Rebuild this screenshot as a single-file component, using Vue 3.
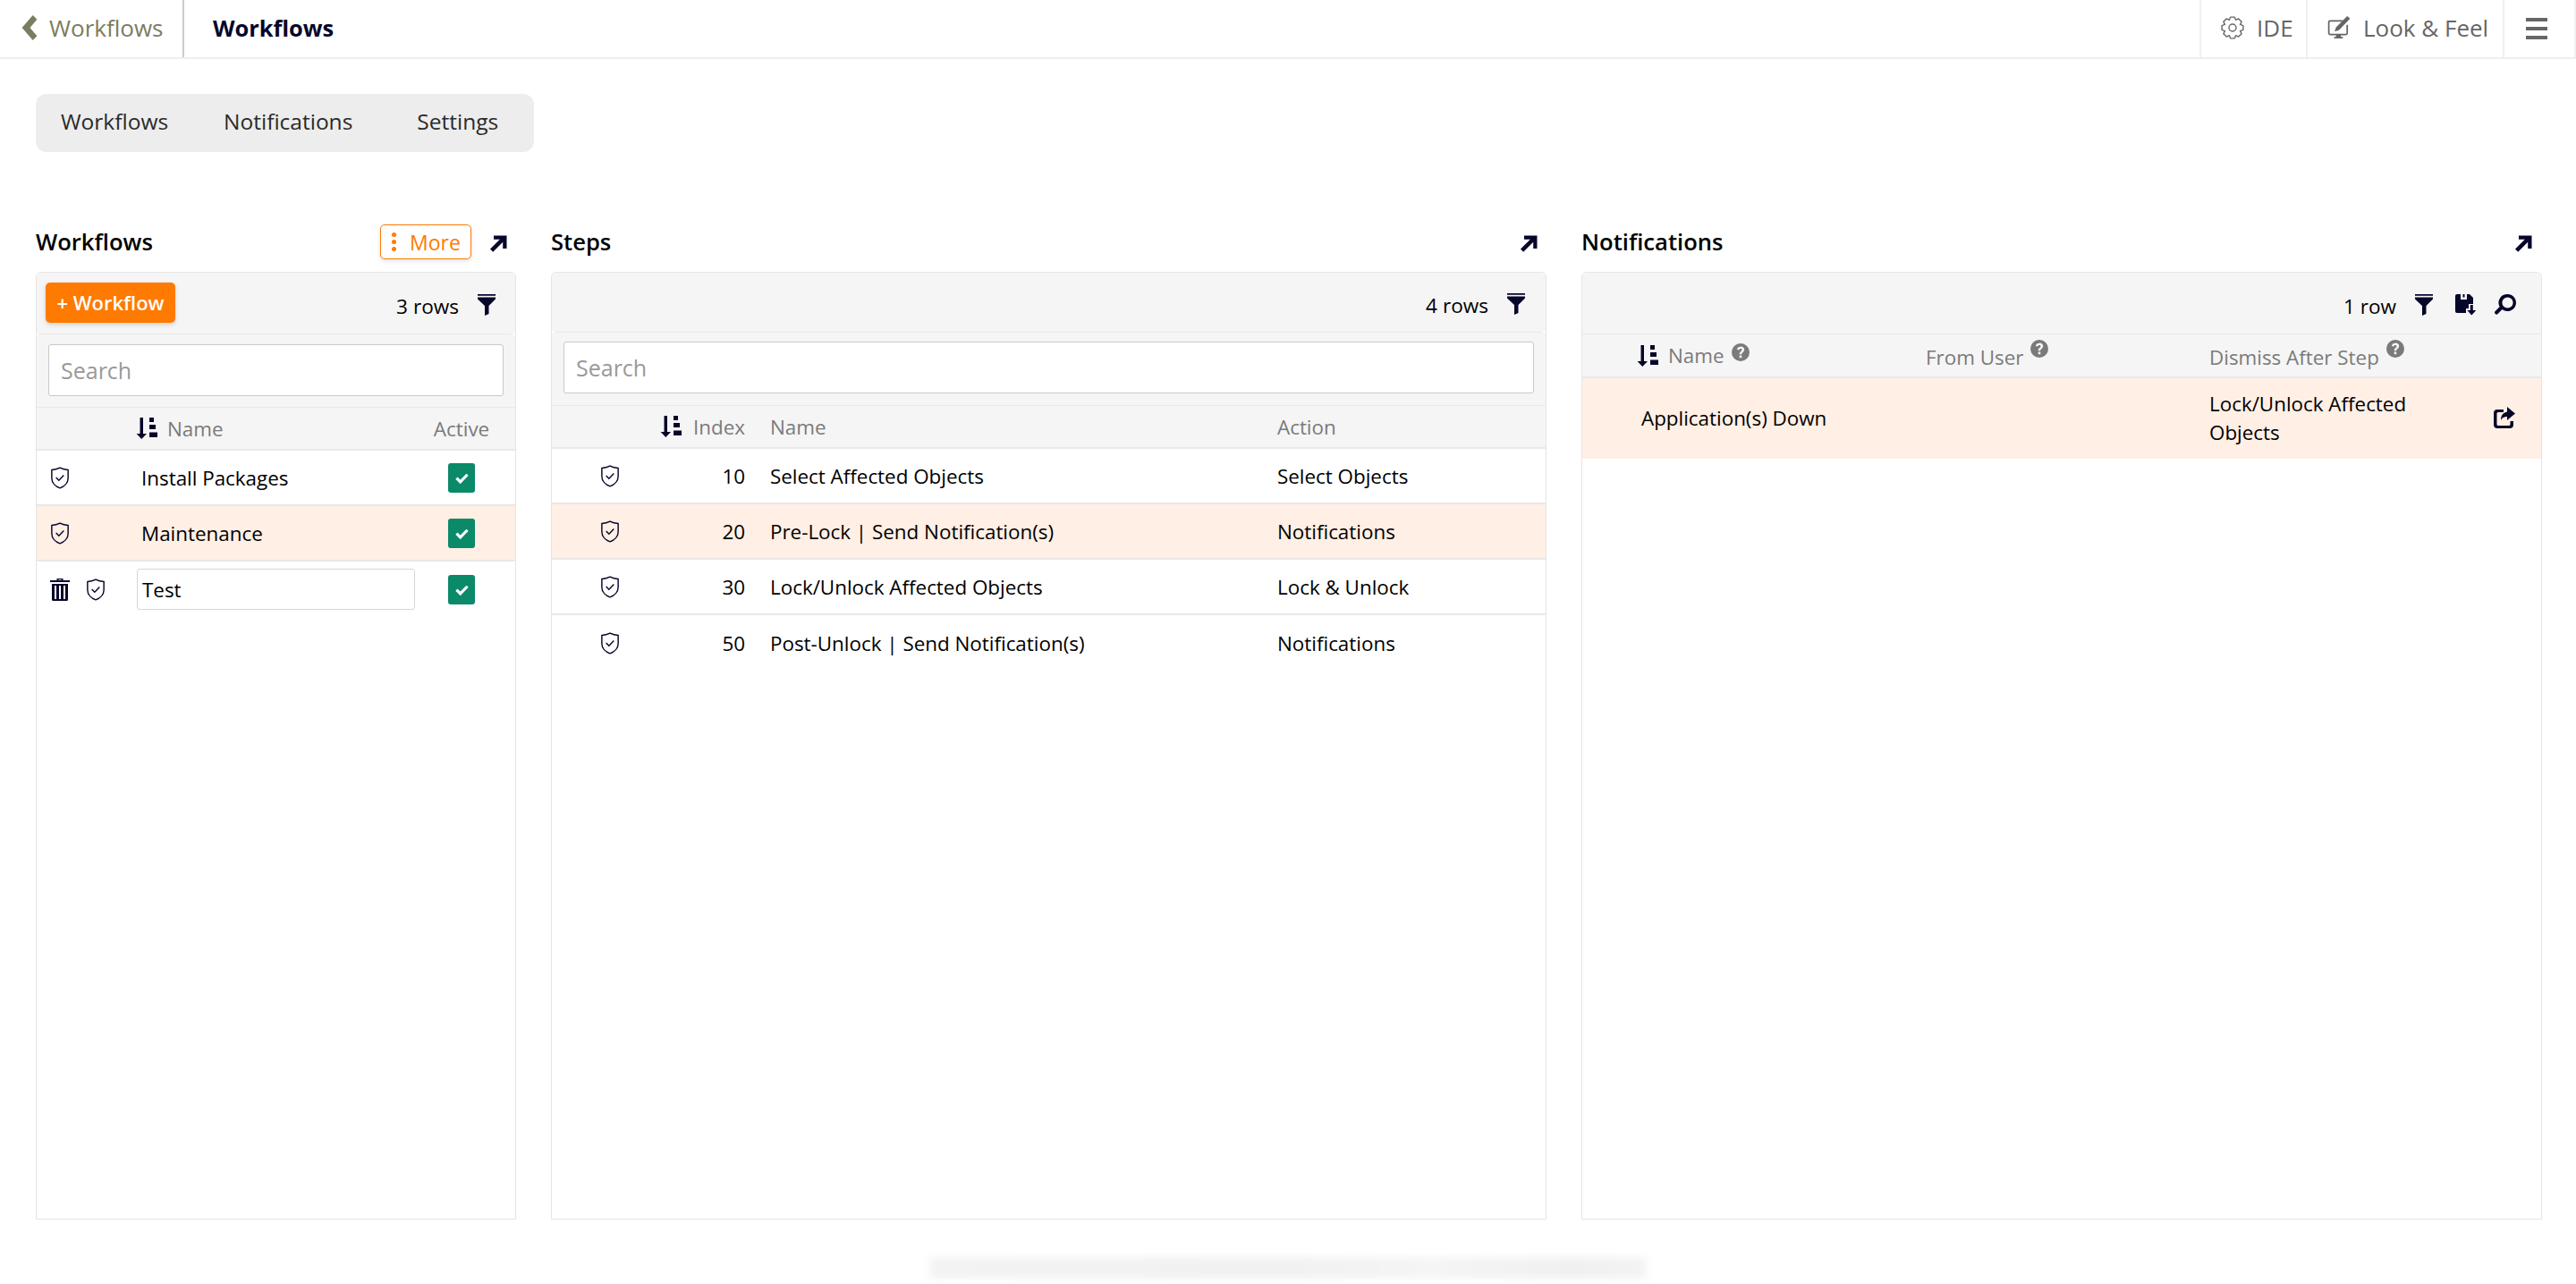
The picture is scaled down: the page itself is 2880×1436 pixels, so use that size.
<script setup>
const tabs = ['Workflows', 'Notifications', 'Settings'];

const workflows = [
  { name: 'Install Packages' },
  { name: 'Maintenance', selected: true },
];

const steps = [
  { index: 10, name: 'Select Affected Objects', action: 'Select Objects' },
  { index: 20, name: 'Pre-Lock | Send Notification(s)', action: 'Notifications', selected: true },
  { index: 30, name: 'Lock/Unlock Affected Objects', action: 'Lock & Unlock' },
  { index: 50, name: 'Post-Unlock | Send Notification(s)', action: 'Notifications' },
];

// outline of the 8 tooth gear in the top bar
const gearPath = (() => {
  const pts = [];
  for (let i = 0; i < 8; i++) {
    const mid = (i * Math.PI) / 4;
    [[-0.39, 8.6], [-0.2, 11.2], [0.2, 11.2], [0.39, 8.6]].forEach(([off, r]) => {
      pts.push(`${(12 + r * Math.cos(mid + off)).toFixed(2)} ${(12 + r * Math.sin(mid + off)).toFixed(2)}`);
    });
  }
  return `M${pts.join('L')}Z`;
})();
</script>

<template>
  <div class="page">
    <svg class="sprite" aria-hidden="true">
      <defs>
        <symbol id="i-arrow" viewBox="0 0 20 20">
          <path d="M5 1.500h14.500V16h-4.300V8.800L4.200 19.800 1 16.600 11.800 5.800H5z" />
        </symbol>
        <symbol id="i-funnel" viewBox="0 0 20 24">
          <path d="M0 0h20v1.800H0zM0 3.500h20v2L12.500 13v9l-4.500 2V13L0 5.500z" />
        </symbol>
        <symbol id="i-sort" viewBox="0 0 24 24">
          <path d="M4.500 0h3.500v18h4l-5.700 6L.6 18h3.900z" />
          <path d="M15 0h5v5h-5zM15 8h7v5h-7zM15 16.500h9V22h-9z" />
        </symbol>
        <symbol id="i-shield" viewBox="0 0 22 26">
          <path d="M11 1.200c3 1.500 6 2.300 9.500 2.500v9.500c0 5.500-4.300 9.800-9.500 11.600C5.800 23 1.500 18.700 1.500 13.200V3.700C5 3.500 8 2.700 11 1.200z" fill="none" stroke="currentColor" stroke-width="1.500" />
          <path d="M6.500 12.500l3.300 3.300 5.700-5.800" fill="none" stroke="currentColor" stroke-width="1.500" />
        </symbol>
        <symbol id="i-trash" viewBox="0 0 22 26">
          <path d="M7.500 3V1h7v2H22v2H0V3zM9.300 2.200V3h3.400v-.8z" />
          <path d="M2 7h18v17.500a1.500 1.500 0 0 1-1.500 1.500h-15A1.500 1.500 0 0 1 2 24.500zM5 9v15h2V9zM10 9v15h2V9zM15 9v15h2V9z" fill-rule="evenodd" />
        </symbol>
        <symbol id="i-check" viewBox="0 0 16 16">
          <path d="M1.500 8.200l4.500 4.500 8.500-8.700" fill="none" stroke="#fff" stroke-width="3.400" />
        </symbol>
        <symbol id="i-help" viewBox="0 0 20 20">
          <path fill-rule="evenodd" d="M10 0a10 10 0 1 1 0 20 10 10 0 0 1 0-20zM8.700 13.600v2.600h2.600v-2.600zM10 3.800c-2.300 0-3.800 1.200-4.100 3.300l2.300.4c.2-1.100.8-1.600 1.800-1.600.9 0 1.500.5 1.500 1.300 0 .7-.4 1.100-1.200 1.700-1.200.9-1.600 1.700-1.600 3.300h2.500c0-.9.200-1.200 1.100-1.900 1.100-.8 1.900-1.700 1.900-3.200 0-2.200-1.700-3.600-4.200-3.600z" />
        </symbol>
      </defs>
    </svg>

    <header class="topbar">
      <a class="back">
        <svg class="back-icon" viewBox="0 0 18 30"><path d="M13 0l5 5L9.500 15 18 25l-5 5L0 15z" /></svg>
        <span>Workflows</span>
      </a>
      <div class="title">Workflows</div>
      <div class="top-actions">
        <a class="top-btn">
          <svg class="top-icon" viewBox="0 0 24 24" fill="none" stroke="currentColor" stroke-width="1.300" stroke-linejoin="round">
            <circle cx="12" cy="12" r="3.700" />
            <path :d="gearPath" />
          </svg>
          <span>IDE</span>
        </a>
        <a class="top-btn look">
          <svg class="top-icon wide" viewBox="0 0 24 24">
            <path d="M16 5H3a1.500 1.500 0 0 0-1.500 1.500v11A1.500 1.500 0 0 0 3 19h16a1.500 1.500 0 0 0 1.500-1.500V9" fill="none" stroke="currentColor" stroke-width="1.600" />
            <path d="M20.500 0L23.500 2.500 12 14.500 7.500 16l1.500-4.500z" />
            <path d="M9 19h5v2.500h2V23H7v-1.500h2z" />
          </svg>
          <span>Look &amp; Feel</span>
        </a>
        <a class="top-btn menu">
          <span class="bars"><i></i><i></i><i></i></span>
        </a>
      </div>
    </header>

    <nav class="tabs">
      <a v-for="tab in tabs" :key="tab" class="tab">{{ tab }}</a>
    </nav>

    <main class="columns">
      <section class="column">
        <div class="col-head">
          <h2>Workflows</h2>
          <button class="more"><span class="dots"><i></i><i></i><i></i></span>More</button>
          <svg class="open-icon first"><use href="#i-arrow" /></svg>
        </div>
        <div class="panel">
          <div class="toolbar wf-toolbar">
            <button class="add">+ Workflow</button>
            <span class="count">3 rows</span>
            <svg class="tool-icon funnel"><use href="#i-funnel" /></svg>
          </div>
          <div class="search-box wf-search">
            <input class="search" type="text" placeholder="Search" />
          </div>
          <div class="row head wf-grid">
            <span></span>
            <span class="with-sort"><svg class="sort"><use href="#i-sort" /></svg>Name</span>
            <span class="center">Active</span>
          </div>
          <div
            v-for="item in workflows"
            :key="item.name"
            class="row wf-grid"
            :class="{ selected: item.selected }"
          >
            <span class="wf-icons"><svg class="shield"><use href="#i-shield" /></svg></span>
            <span class="wf-name">{{ item.name }}</span>
            <span class="center"><span class="checkbox"><svg><use href="#i-check" /></svg></span></span>
          </div>
          <div class="row wf-grid edit-row">
            <span class="wf-icons"><svg class="trash"><use href="#i-trash" /></svg><svg class="shield"><use href="#i-shield" /></svg></span>
            <span><input class="name-input" type="text" value="Test" /></span>
            <span class="center"><span class="checkbox"><svg><use href="#i-check" /></svg></span></span>
          </div>
        </div>
      </section>

      <section class="column">
        <div class="col-head">
          <h2>Steps</h2>
          <svg class="open-icon"><use href="#i-arrow" /></svg>
        </div>
        <div class="panel">
          <div class="toolbar steps-toolbar">
            <span class="count">4 rows</span>
            <svg class="tool-icon funnel"><use href="#i-funnel" /></svg>
          </div>
          <div class="search-box steps-search">
            <input class="search" type="text" placeholder="Search" />
          </div>
          <div class="row head steps-grid">
            <span></span>
            <span class="index-head"><svg class="sort"><use href="#i-sort" /></svg>Index</span>
            <span class="cell step-name">Name</span>
            <span class="cell">Action</span>
          </div>
          <div
            v-for="step in steps"
            :key="step.index"
            class="row steps-grid step-row"
            :class="{ selected: step.selected }"
          >
            <span class="step-icon"><svg class="shield"><use href="#i-shield" /></svg></span>
            <span class="index">{{ step.index }}</span>
            <span class="cell step-name">{{ step.name }}</span>
            <span class="cell">{{ step.action }}</span>
          </div>
        </div>
      </section>

      <section class="column">
        <div class="col-head">
          <h2>Notifications</h2>
          <svg class="open-icon last"><use href="#i-arrow" /></svg>
        </div>
        <div class="panel">
          <div class="toolbar note-toolbar">
            <span class="count">1 row</span>
            <svg class="tool-icon funnel"><use href="#i-funnel" /></svg>
            <svg class="tool-icon save" viewBox="0 0 24 24">
              <path fill-rule="evenodd" d="M2 0h14l4 4v7h-5v5h-3v5H2a2 2 0 0 1-2-2V2a2 2 0 0 1 2-2zM6 0v6h7V0h-2.500v3.500h-2V0z" />
              <path d="M16.800 12h3v6h3.500l-5 5.500-5-5.500h3.500z" />
            </svg>
            <svg class="tool-icon find" viewBox="0 0 24 24">
              <path fill-rule="evenodd" d="M14.500 0a9.500 9.500 0 1 1-6 16.900l-4.900 5a2 2 0 0 1-2.900-2.800l5-5A9.500 9.500 0 0 1 14.500 0zm0 3.400a6.100 6.100 0 1 0 0 12.200 6.100 6.100 0 0 0 0-12.200z" />
            </svg>
          </div>
          <div class="row head note-head note-grid">
            <span class="with-sort note-name"><svg class="sort"><use href="#i-sort" /></svg>Name<svg class="help raised"><use href="#i-help" /></svg></span>
            <span class="cell">From User<svg class="help"><use href="#i-help" /></svg></span>
            <span class="cell">Dismiss After Step<svg class="help"><use href="#i-help" /></svg></span>
          </div>
          <div class="row note-row note-grid selected">
            <span class="note-title">Application(s) Down</span>
            <span></span>
            <span class="cell">Lock/Unlock Affected Objects</span>
            <svg class="jump" viewBox="0 0 24 24">
              <path d="M15 0l9 7.500-9 7.500v-4c-3.500 0-5.500 1-7 4 0-5.500 2.500-8.500 7-9.500z" />
              <path d="M4 3h7v3H5a1.500 1.500 0 0 0-1.500 1.500v12A1.500 1.500 0 0 0 5 21h12a1.500 1.500 0 0 0 1.500-1.500V16H22v4a4 4 0 0 1-4 4H4a4 4 0 0 1-4-4V7a4 4 0 0 1 4-4z" />
            </svg>
          </div>
        </div>
      </section>
    </main>

    <div class="footer-blur"></div>
  </div>
</template>

<style scoped>
.page {
  font-family: "Open Sans", "Noto Sans", sans-serif;
  font-size: 22.4px;
  color: #000;
  height: 1436px;
  overflow: hidden;
  position: relative;
}

.sprite {
  position: absolute;
  width: 0;
  height: 0;
}

.topbar {
  display: flex;
  align-items: stretch;
  height: 64px;
  border-bottom: 2px solid #eeeeee;
  box-sizing: content-box;
}

.back {
  display: flex;
  align-items: center;
  width: 206px;
  box-sizing: border-box;
  padding: 0 0 3px 24px;
  border-right: 2px solid #cccccc;
  color: #7a7d5e;
  font-size: 26px;
}

.back-icon {
  width: 18px;
  height: 28px;
  margin-right: 13px;
  fill: #7a7d5e;
}

.title {
  display: flex;
  align-items: center;
  margin-left: 30px;
  padding: 0 0 3px 2px;
  color: #06062b;
  font-size: 25.4px;
  font-weight: 700;
}

.top-actions {
  display: flex;
  margin-left: auto;
}

.top-btn {
  display: flex;
  align-items: center;
  padding: 0 0 3px 22px;
  width: 119px;
  box-sizing: border-box;
  border-left: 2px solid #f0f0f0;
  color: #666666;
  font-size: 26px;
}

.look {
  width: 220px;
}

.menu {
  width: 82px;
  padding: 0 0 0 24px;
  border-right: 2px solid #f0f0f0;
}

.top-icon {
  width: 26px;
  height: 26px;
  margin-right: 14px;
  flex: none;
  color: #666666;
  fill: none;
}

.top-icon.wide {
  fill: #666666;
}

.bars {
  display: flex;
  flex-direction: column;
  gap: 6px;
  width: 24px;
}

.bars i {
  display: block;
  height: 4px;
  background: #666666;
}

.tabs {
  display: inline-flex;
  align-items: center;
  height: 65px;
  width: 557px;
  box-sizing: border-box;
  margin: 39px 0 0 40px;
  padding-bottom: 4px;
  background: #ededed;
  border-radius: 12px;
  color: #2a2a2a;
  font-size: 24.5px;
}

.tab:nth-child(1) {
  margin-left: 28px;
}

.tab:nth-child(2) {
  margin-left: 62px;
}

.tab:nth-child(3) {
  margin-left: 72px;
}

.columns {
  display: grid;
  grid-template-columns: 537px 1113px 1074px;
  gap: 38px 39px;
  margin: 64px 39px 0 40px;
}

.column {
  display: flex;
  flex-direction: column;
}

.col-head {
  display: flex;
  align-items: center;
  height: 70px;
  margin-top: 0;
  padding-top: 3px;
  box-sizing: border-box;
}

h2 {
  margin: 0;
  font-size: 25.6px;
  font-weight: 600;
  margin-right: auto;
}

.more {
  display: flex;
  align-items: center;
  width: 102px;
  height: 39px;
  padding: 0 0 0 12px;
  margin-right: 20px;
  background: #fff;
  border: 1px solid #ff7a00;
  border-radius: 5px;
  box-shadow: 0 2px 5px rgba(0, 0, 0, 0.12);
  color: #ff7a00;
  font-family: inherit;
  font-size: 23px;
  font-weight: 500;
}

.dots {
  display: flex;
  flex-direction: column;
  gap: 3px;
  margin-right: 15px;
}

.dots i {
  display: block;
  width: 5px;
  height: 5px;
  background: #ff7a00;
  border-radius: 50%;
}

.open-icon {
  width: 20px;
  height: 20px;
  margin-top: 2px;
  fill: #06062b;
  margin-right: 10px;
}

.open-icon.last {
  margin-right: 11px;
}

.panel {
  display: flex;
  flex-direction: column;
  height: 1060px;
  box-sizing: border-box;
  border: 1px solid #e5e5e5;
  border-radius: 6px 6px 0 0;
}

.toolbar {
  display: flex;
  align-items: center;
  justify-content: flex-end;
  height: 66px;
  flex: none;
  padding: 6px 19px 0 10px;
  box-sizing: border-box;
  background: #f5f5f5;
  border-radius: 6px 6px 0 0;
}

.wf-toolbar {
  height: 68px;
  padding-right: 22px;
}

.steps-toolbar {
  padding-right: 23px;
}

.note-toolbar {
  height: 68px;
  padding-right: 28px;
}

.count {
  font-size: 22.6px;
}

.tool-icon {
  width: 20px;
  height: 24px;
  margin-left: 21px;
  margin-top: -2px;
  fill: #06062b;
}

.save {
  width: 24px;
  margin-left: 25px;
}

.find {
  width: 24px;
  margin-left: 20px;
}

.wf-toolbar .add {
  margin-right: auto;
  margin-top: 0;
  margin-bottom: 8px;
}

.add {
  width: 145px;
  height: 45px;
  padding: 0;
  background: #ff7a00;
  border: none;
  border-radius: 5px;
  box-shadow: 0 2px 5px rgba(0, 0, 0, 0.15);
  color: #fff;
  font-family: inherit;
  font-size: 22px;
  font-weight: 600;
}

.search-box {
  flex: none;
  background: #f5f5f5;
  box-sizing: border-box;
  border-top: 1px solid #e8e8e8;
  border-radius: 6px 6px 0 0;
}

.wf-search {
  padding: 11px 13px 12px 13px;
}

.steps-search {
  padding: 10px 13px 13px 13px;
}

.search {
  display: block;
  width: 100%;
  height: 58px;
  box-sizing: border-box;
  padding: 0 13px;
  background: #fff;
  border: 1px solid #c9c9c9;
  border-radius: 3px;
  font-family: inherit;
  font-size: 25px;
  color: #000;
  outline: none;
}

.search::placeholder {
  color: #999999;
  opacity: 1;
}

.row {
  display: grid;
  align-items: center;
  height: 62px;
  flex: none;
  box-sizing: border-box;
  border-bottom: 2px solid #e8e8e8;
  background: #fff;
}

.head {
  height: 49px;
  background: #f5f5f5;
  border-top: 1px solid #e8e8e8;
  color: #7a7a7a;
}

.selected {
  background: #ffefe5;
}

.wf-grid {
  grid-template-columns: 111px 323px 1fr;
}

.edit-row {
  border-bottom: none;
}

.step-row:last-child {
  border-bottom: none;
}

.center {
  padding-right: 19px;
  text-align: center;
}

.with-sort {
  display: flex;
  align-items: center;
}

.sort {
  width: 24px;
  height: 24px;
  margin-right: 11px;
  fill: #06062b;
  flex: none;
}

.wf-name {
  padding-left: 6px;
}

.wf-icons {
  display: flex;
  align-items: center;
  padding-left: 15px;
  gap: 18px;
}

.shield {
  width: 22px;
  height: 25px;
  color: #06062b;
  flex: none;
}

.trash {
  width: 22px;
  height: 26px;
  fill: #06062b;
  flex: none;
}

.checkbox {
  display: inline-flex;
  align-items: center;
  justify-content: center;
  width: 30px;
  height: 33px;
  vertical-align: middle;
  background: #0a8a68;
  border-radius: 3px;
}

.checkbox svg {
  width: 15px;
  height: 15px;
}

.name-input {
  display: block;
  width: 311px;
  height: 46px;
  box-sizing: border-box;
  padding: 0 5px;
  margin-left: 1px;
  background: #fff;
  border: 1px solid #d6d6d6;
  border-radius: 3px;
  font-family: inherit;
  font-size: 22.4px;
  color: #000;
  outline: none;
}

.steps-grid {
  grid-template-columns: 100px 116px 580px 1fr;
}

.step-icon {
  padding-left: 54px;
  display: flex;
}

.index,
.index-head {
  text-align: right;
}

.index-head {
  display: flex;
  align-items: center;
  justify-content: flex-end;
}

.index-head .sort {
  margin-right: 13px;
}

.cell {
  padding-left: 15px;
}

.step-name {
  padding-left: 28px;
}

.note-head {
  height: 50px;
}

.note-grid {
  grid-template-columns: 369px 317px 1fr;
}

.note-name {
  padding-left: 61px;
}

.note-row {
  position: relative;
  height: 90px;
  border-bottom: none;
  line-height: 32px;
}

.note-row .cell {
  padding-right: 120px;
}

.note-title {
  padding-left: 66px;
}

.help {
  width: 20px;
  height: 20px;
  margin-left: 8px;
  fill: #7a7a7a;
  vertical-align: 8px;
}

.help.raised {
  margin-top: -8px;
}

.jump {
  position: absolute;
  right: 29px;
  top: 32px;
  width: 24px;
  height: 24px;
  fill: #06062b;
}

.footer-blur {
  width: 800px;
  height: 24px;
  margin: 42px auto 0;
  background: linear-gradient(90deg, #f3f3f3, #f1f1f1 50%, #f5f5f5 70%, #f0f0f0 90%, #f3f3f3);
  filter: blur(4px);
}
</style>
